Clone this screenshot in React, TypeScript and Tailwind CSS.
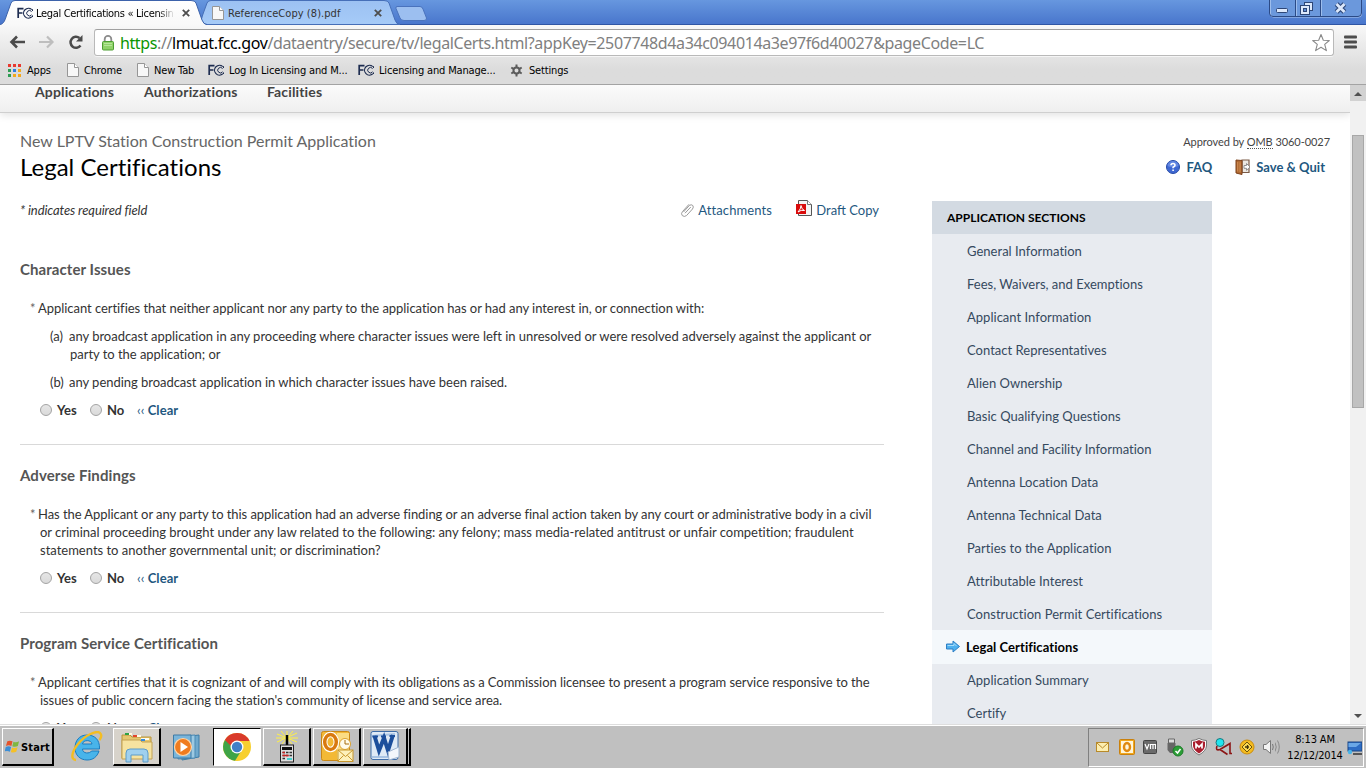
import React from "react";

const ui = "font-['DejaVu_Sans_Condensed','DejaVu_Sans',sans-serif]";

function FccLogo({ size = 16 }: { size?: number }) {
  return (
    <svg width={size} height={size} viewBox="0 0 16 16" fill="none" stroke="#1d2c50" className="shrink-0">
      <path d="M1.200 13V3.700H6.500M1.200 8H5.500" strokeWidth="1.700" />
      <path d="M14.800 4.600A4.900 4.900 0 1 0 14.800 11.800" strokeWidth="1.200" />
      <path d="M14.600 6.600A2.700 2.700 0 1 0 14.600 9.800M15.500 4.200V6M15.500 10.400V12" strokeWidth="1" />
    </svg>
  );
}

function PageIcon() {
  return (
    <svg width="12" height="14" viewBox="0 0 12 14" className="shrink-0">
      <path d="M.5.5H7.500L11.500 4.500V13.500H.5Z" fill="#f7f7f7" stroke="#969696" />
      <path d="M7.500.5V4.500H11.500" fill="#fff" stroke="#969696" />
    </svg>
  );
}

function CloseX() {
  return (
    <svg width="8" height="8" viewBox="0 0 8 8" stroke="#4d4d4d" strokeWidth="1.800" className="shrink-0">
      <path d="M.8.8L7.200 7.200M7.200.8L.8 7.200" />
    </svg>
  );
}

function TabStrip() {
  return (
    <div className="relative flex h-[25px] shrink-0 border-b border-[#2f55a4] bg-linear-to-b from-[#6797df] to-[#4976cc]">
      <svg width="440" height="26" className="absolute left-0 top-0">
        <defs>
          <linearGradient id="t2" x1="0" y1="0" x2="0" y2="1">
            <stop offset="0" stopColor="#9cc1f2" />
            <stop offset="1" stopColor="#a6cbf8" />
          </linearGradient>
          <linearGradient id="t1" x1="0" y1="0" x2="0" y2="1">
            <stop offset="0" stopColor="#ffffff" />
            <stop offset="1" stopColor="#f8f8f8" />
          </linearGradient>
        </defs>
        <path d="M196 24.500C201 24 201 20 203 14L207 3Q208 .5 211 .5H384Q388 .5 389 3L395 20Q396.500 24.500 400 24.500Z" fill="url(#t2)" stroke="#466fb8" />
        <path d="M397 6.500H420Q422 6.500 423 9L426.500 18Q427 20.500 424 20.500H404Q401 20.500 400 18L396 8.500Q395.500 6.500 397 6.500Z" fill="#9cbff0" stroke="#4a73bd" />
        <path d="M0 26V24.500C4 24 5 20 7 14L11 3Q12 .5 15 .5H191Q195 .5 196 3L202 20Q203.500 24.500 207 25V26Z" fill="url(#t1)" />
        <path d="M0 24.500C4 24 5 20 7 14L11 3Q12 .5 15 .5H191Q195 .5 196 3L202 20Q203.500 24.500 207 24.500" fill="none" stroke="#3c62aa" />
      </svg>
      <div className="relative flex h-[26px] w-[206px] items-center pl-[17px]">
        <FccLogo />
        <span className={`${ui} ml-[3px] w-[139px] overflow-hidden whitespace-nowrap bg-linear-to-r from-black from-88% to-transparent bg-clip-text pt-[2px] text-[11px] tracking-[-0.33px] text-transparent`}>
          Legal Certifications « Licensin
        </span>
        <span className="ml-[7px]"><CloseX /></span>
      </div>
      <div className="relative flex h-[26px] w-[190px] items-center pl-[6px]">
        <PageIcon />
        <span className={`${ui} ml-[4px] w-[142px] whitespace-nowrap pt-[2px] text-[11px] tracking-[0.06px] text-[#333]`}>ReferenceCopy (8).pdf</span>
        <span className="ml-[4px]"><CloseX /></span>
      </div>
      <svg width="94" height="18" viewBox="0 0 94 18" className="ml-auto mr-[3px]">
        <path d="M1.500 0V14Q1.500 17 4.500 17H89.500Q92.500 17 92.500 14V0" fill="#6b98dc" stroke="#b0c9f0" />
        <path d="M.5 0V13Q.5 16.500 4 16.500H89Q92.500 16.500 92.500 13V0M26.500 0V16M51.500 0V16" fill="none" stroke="#2b4a86" />
        <path d="M27.500 0V16M52.500 0V16M1.500 0V13" stroke="#9dbdec" />
        <rect x="7.500" y="8.500" width="11" height="4" rx="1" fill="#dce8fb" stroke="#2d4677" />
        <rect x="35.500" y="2.500" width="8" height="8" fill="#dce8fb" stroke="#2d4677" />
        <rect x="31.500" y="5.500" width="9" height="9" fill="#dce8fb" stroke="#2d4677" />
        <rect x="34.500" y="8.500" width="3" height="3" fill="#5e8cd5" stroke="#2d4677" />
        <path d="M67.500 4L75.500 12M75.500 4L67.500 12" stroke="#2d4677" strokeWidth="5" />
        <path d="M67.500 4L75.500 12M75.500 4L67.500 12" stroke="#dce8fb" strokeWidth="2.800" />
      </svg>
    </div>
  );
}

function Toolbar() {
  return (
    <div className="flex h-[33px] shrink-0 items-center pt-[2px]">
      <svg width="90" height="18" viewBox="0 0 90 18" fill="none" className="-mt-[2px] shrink-0">
        <path d="M25 9H12M17 3.500L11.500 9L17 14.500" stroke="#4b4b4b" strokeWidth="2.600" />
        <path d="M39 9H52M47 3.500L52.500 9L47 14.500" stroke="#bebebe" strokeWidth="2.200" />
        <path d="M80.500 12.500A5.500 5.500 0 1 1 79.500 5" stroke="#4b4b4b" strokeWidth="2.500" />
        <path d="M82.500 2V8.500H76Z" fill="#4b4b4b" />
      </svg>
      <div className="ml-[4px] flex h-[27px] w-[1240px] shrink-0 items-center rounded-[3px] border border-[#b9b9b9] border-t-[#a0a0a0] bg-white pl-[7px] shadow-[0_1px_0_#f5f5f5]">
        <svg width="12" height="16" viewBox="0 0 12 16" className="shrink-0">
          <path d="M2.700 7V4.200A3.300 3.300 0 0 1 9.300 4.200V7" fill="none" stroke="#8c8c8c" strokeWidth="1.800" />
          <rect x=".5" y="6.500" width="11" height="8.500" rx="1" fill="#8fd269" stroke="#4d9e33" />
          <path d="M2 8.500H10M2 10.500H10" stroke="#b6e69a" />
        </svg>
        <span className="ml-[6px] whitespace-nowrap font-['Noto_Sans',sans-serif] text-[16px] leading-[24px] tracking-[-0.395px] text-[#808080]">
          <span className="text-[#0b9500]">https</span>://<span className="text-black">lmuat.fcc.gov</span>/dataentry/secure/tv/legalCerts.html?<span className="tracking-[-0.37px]">appKey=2507748d4a34c094014a3e97f6d40027&amp;pageCode=LC</span>
        </span>
        <svg width="20" height="20" viewBox="0 0 20 20" className="ml-auto mr-[2px] shrink-0">
          <path d="M10 1.500L12.300 7.200L18.300 7.500L13.700 11.400L15.400 17.600L10 14.200L4.600 17.600L6.300 11.400L1.700 7.500L7.700 7.200Z" fill="#fff" stroke="#8a8a8a" strokeWidth="1.100" strokeLinejoin="round" />
        </svg>
      </div>
      <svg width="13" height="14" viewBox="0 0 13 14" className="-mt-px ml-[10px] shrink-0" fill="#4d4d4d">
        <rect y=".5" width="13" height="3" rx="1" /><rect y="5.500" width="13" height="3" rx="1" /><rect y="10.500" width="13" height="3" rx="1" />
      </svg>
    </div>
  );
}

const dots = ["#e8392f", "#e8392f", "#e8392f", "#2e9c53", "#2f7de1", "#f2a81d", "#2e9c53", "#f2a81d", "#f2a81d"];

function Bookmark({ icon, label, cls }: { icon: React.ReactNode; label: string; cls: string }) {
  return (
    <div className={`flex shrink-0 items-center ${cls}`}>
      {icon}
      <span className="whitespace-nowrap pt-[2px]">{label}</span>
    </div>
  );
}

function BookmarksBar() {
  return (
    <div className={`${ui} flex h-[26px] shrink-0 items-center pb-[2px] pl-[8px] text-[11px] tracking-[-0.16px] text-black`}>
      <Bookmark
        cls="w-[59px] gap-[6px]"
        label="Apps"
        icon={
          <svg width="13" height="13" viewBox="0 0 13 13" className="shrink-0">
            {dots.map((c, i) => <rect key={i} x={(i % 3) * 5} y={Math.floor(i / 3) * 5} width="3" height="3" fill={c} />)}
          </svg>
        }
      />
      <Bookmark cls="w-[70px] gap-[5px]" label="Chrome" icon={<PageIcon />} />
      <Bookmark cls="w-[71px] gap-[5px]" label="New Tab" icon={<PageIcon />} />
      <Bookmark cls="w-[150px] gap-[5px]" label="Log In Licensing and M..." icon={<FccLogo />} />
      <Bookmark cls="w-[152px] gap-[5px]" label="Licensing and Manage..." icon={<FccLogo />} />
      <Bookmark
        cls="gap-[6px]"
        label="Settings"
        icon={
          <svg width="13" height="13" viewBox="0 0 13 13" stroke="#5b5b5b" fill="none" className="shrink-0">
            <circle cx="6.500" cy="6.500" r="3" strokeWidth="2" />
            <path d="M6.500 .5V3M6.500 10V12.500M1.300 3.500L3.500 4.800M9.500 8.200L11.700 9.500M1.300 9.500L3.500 8.200M9.500 4.800L11.700 3.500" strokeWidth="2" />
          </svg>
        }
      />
    </div>
  );
}

function Answer() {
  const radio = "size-[12px] rounded-full border border-[#a3a3a3] bg-linear-to-b from-[#e6e6e6] to-[#dadada]";
  return (
    <div className="mt-[10px] flex h-[18px] items-center pl-[20px] font-bold text-[#333]">
      <span className={radio} />
      <span className="ml-[5px] w-[33px]">Yes</span>
      <span className={radio} />
      <span className="ml-[5px] w-[30px]">No</span>
      <span className="whitespace-nowrap tracking-[0.07px] text-[#1f587f]"><span className="font-normal">‹‹</span> Clear</span>
    </div>
  );
}

function Section({ title, lines, children }: { title: string; lines: { t: string; c: string }[]; children?: React.ReactNode }) {
  return (
    <section className="border-b border-[#d9d9d9] pb-[25px] pt-[21px]">
      <h2 className="h-[18px] text-[15px] font-bold leading-[18px] tracking-[0.08px] text-[#555]">{title}</h2>
      <div className="mt-[21px] pl-[20px]">
        {lines.map((l, i) => (
          <p key={l.t} className={`h-[18px] whitespace-nowrap ${i === 0 ? "-ml-[10px]" : ""}`}>
            {i === 0 && <span className="inline-block w-[8px] text-[#666]">*</span>}
            <span className={l.c}>{l.t}</span>
          </p>
        ))}
        {children}
      </div>
      <Answer />
    </section>
  );
}

function Content() {
  return (
    <div className="w-[864px]">
      <div className="flex h-[20px] items-center pt-[2px] text-[13px]">
        <i className="tracking-[-0.1px] text-[#333]">* indicates required field</i>
        <svg width="15" height="16" viewBox="0 0 14 16" fill="none" className="-mt-[2px] ml-auto shrink-0">
          <path d="M3 10L8.800 3.500Q10.800 2 12.300 3.500Q13.500 5 12 7L6 13.600Q3.800 15.300 1.800 13.600Q.2 11.700 1.900 9.700L8.500 2.300M4.500 11.200L10.300 5" stroke="#9a9a9a" strokeWidth="1" />
        </svg>
        <a className="ml-[3px] w-[98px] whitespace-nowrap tracking-[0.09px] text-[#1f587f]">Attachments</a>
        <svg width="17" height="18" viewBox="0 0 17 18" className="-mt-[7px] shrink-0">
          <path d="M2.500 1.500H11.500L15.500 5.500V16.500H2.500Z" fill="#f4f4f4" stroke="#555" />
          <path d="M11.500 1.500V5.500H15.500" fill="#fff" stroke="#777" />
          <rect x="0" y="5" width="10" height="10" fill="#d90b0b" />
          <path d="M2 13Q5 10 5 6.500Q5.500 10.500 8.500 11.500Q5 10.500 2 13" fill="none" stroke="#fff" />
        </svg>
        <a className="ml-[3px] mr-[5px] whitespace-nowrap text-[#1f587f]">Draft Copy</a>
      </div>
      <div className="mt-[19px] text-[13px] leading-[18px] text-[#333]">
        <Section
          title="Character Issues"
          lines={[{ t: "Applicant certifies that neither applicant nor any party to the application has or had any interest in, or connection with:", c: "tracking-[-0.047px]" }]}
        >
          <ol className="pl-[10px]">
            <li className="mt-[10px] flex whitespace-nowrap">
              <span className="w-[19px] shrink-0">(a)</span>
              <div>
                <p className="tracking-[-0.024px]">any broadcast application in any proceeding where character issues were left in unresolved or were resolved adversely against the applicant or</p>
                <p className="pl-px tracking-[-0.03px]">party to the application; or</p>
              </div>
            </li>
            <li className="mt-[10px] flex whitespace-nowrap">
              <span className="w-[19px] shrink-0">(b)</span>
              <p className="tracking-[-0.035px]">any pending broadcast application in which character issues have been raised.</p>
            </li>
          </ol>
        </Section>
        <Section
          title="Adverse Findings"
          lines={[
            { t: "Has the Applicant or any party to this application had an adverse finding or an adverse final action taken by any court or administrative body in a civil", c: "tracking-[-0.06px]" },
            { t: "or criminal proceeding brought under any law related to the following: any felony; mass media-related antitrust or unfair competition; fraudulent", c: "tracking-[-0.021px]" },
            { t: "statements to another governmental unit; or discrimination?", c: "" },
          ]}
        />
        <Section
          title="Program Service Certification"
          lines={[
            { t: "Applicant certifies that it is cognizant of and will comply with its obligations as a Commission licensee to present a program service responsive to the", c: "tracking-[-0.064px]" },
            { t: "issues of public concern facing the station's community of license and service area.", c: "tracking-[-0.07px]" },
          ]}
        />
      </div>
    </div>
  );
}

const sections = [
  "General Information", "Fees, Waivers, and Exemptions", "Applicant Information", "Contact Representatives",
  "Alien Ownership", "Basic Qualifying Questions", "Channel and Facility Information", "Antenna Location Data",
  "Antenna Technical Data", "Parties to the Application", "Attributable Interest", "Construction Permit Certifications",
  "Legal Certifications", "Application Summary", "Certify",
];

function Sidebar() {
  return (
    <aside className="ml-[48px] w-[280px] shrink-0 bg-[#e8ebf0] text-[13px] text-[#35495e]">
      <h3 className="flex h-[33px] items-center bg-[#d3dae2] pl-[15px] text-[12px] font-bold text-black">APPLICATION SECTIONS</h3>
      {sections.map((s) =>
        s === "Legal Certifications" ? (
          <div key={s} className="-mb-px flex h-[34px] items-center bg-[#f4f8fb] pl-[14px] font-bold text-black">
            <svg width="14" height="13" viewBox="0 0 14 13" className="-mt-px shrink-0">
              <path d="M.5 4H7V1L13.500 6.500L7 12V9H.5Z" fill="#4eb0ee" stroke="#2d7fc4" />
              <path d="M1.500 5.500H8V3.500L10.500 6" fill="none" stroke="#a5dcfa" />
            </svg>
            <span className="ml-[6px] pt-px tracking-[0.06px]">{s}</span>
          </div>
        ) : (
          <div key={s} className="flex h-[33px] items-center whitespace-nowrap pl-[35px] pt-[2px] tracking-[0.02px]">{s}</div>
        )
      )}
    </aside>
  );
}

function Page() {
  return (
    <div className="flex h-[639px] shrink-0">
      <main className="h-[639px] w-[1350px] overflow-hidden bg-white font-[Lato,sans-serif]">
        <nav className="flex h-[28px] border-b border-[#cfcfcf] bg-linear-to-b from-[#fbfbfb] to-[#efefef] pl-[35px] text-[14px] font-bold leading-[13px] tracking-[0.14px] text-[#444] shadow-[0_2px_8px_rgba(0,0,0,0.12)]">
          <a className="w-[109px]">Applications</a>
          <a className="w-[123px]">Authorizations</a>
          <a>Facilities</a>
        </nav>
        <div className="flex h-[88px] justify-between px-[20px] pt-[17px]">
          <div>
            <p className="h-[20px] whitespace-nowrap text-[16px] leading-[22px] tracking-[-0.01px] text-[#666]">New LPTV Station Construction Permit Application</p>
            <h1 className="whitespace-nowrap text-[24px] leading-[34px] tracking-[0.02px] text-black">Legal Certifications</h1>
          </div>
          <div className="text-right">
            <p className="pt-[4px] text-[11px] leading-[16px] tracking-[-0.06px] text-[#444]">
              Approved by <span className="border-b border-dotted border-[#555]">OMB</span> 3060-0027
            </p>
            <div className="mt-[8px] flex h-[20px] items-center justify-end pr-[5px] text-[13px] font-bold text-[#1f587f]">
              <svg width="14" height="14" viewBox="0 0 14 14" className="-mt-[2px] shrink-0">
                <circle cx="7" cy="7" r="6.500" fill="#3f68d2" stroke="#264ba6" />
                <path d="M1.500 6A5.500 5 0 0 1 12.500 6Q7 8.500 1.500 6" fill="#7b9cec" opacity=".6" />
                <path d="M5 5.300Q5 3.500 7 3.500Q9 3.500 9 5.200Q9 6.300 7.100 7.200V8.300M7.100 9.500V11" fill="none" stroke="#fff" strokeWidth="1.600" />
              </svg>
              <a className="ml-[6px]">FAQ</a>
              <svg width="16" height="16" viewBox="0 0 15 16" className="-mt-[2px] ml-[23px] shrink-0">
                <path d="M6.500 1H13.500V13.500H6.500Z" fill="#ece8e2" stroke="#7b5b47" strokeWidth="1.200" />
                <path d="M.5 1L6.500 1.500V15.500L.5 14Z" fill="#b06a33" stroke="#7d411b" />
                <path d="M2.200 3V12.500M4.500 3.300V13" stroke="#d08e55" />
                <path d="M8.500 6.500H11V4.500L14.500 8L11 11.300V9.300H8.500Z" fill="#fff" stroke="#8f8f8f" />
              </svg>
              <a className="ml-[5px] whitespace-nowrap">Save &amp; Quit</a>
            </div>
          </div>
        </div>
        <div className="flex pl-[20px]">
          <div className="-mt-px"><Content /></div>
          <Sidebar />
        </div>
      </main>
      <div className="flex w-[16px] flex-col items-center bg-[#f1f1f1]">
        <div className="flex h-[16px] w-[16px] items-center justify-center bg-[#d2d2d2]">
          <svg width="8" height="4" className="mt-[2px]"><path d="M0 4L4 0L8 4Z" fill="#505050" /></svg>
        </div>
        <div className="mt-[34px] h-[273px] w-[12px] border border-[#a8a8a8] bg-[#c1c1c1]" />
        <svg width="8" height="4" className="mb-[6px] mt-auto"><path d="M0 0L4 4L8 0Z" fill="#505050" /></svg>
      </div>
    </div>
  );
}

const raised = "border border-b-2 border-r-2 border-l-[#fff] border-t-[#fff] border-b-black border-r-black";

function Taskbar() {
  return (
    <div className="flex h-[44px] shrink-0 items-start border-t border-[#dedede] bg-[#c0c0c0] shadow-[inset_0_1px_0_#fff]">
      <div className={`${raised} ml-[2px] mt-[3px] flex h-[38px] w-[52px] items-center pl-[2px]`}>
        <svg width="15" height="15" viewBox="0 0 16 16" className="shrink-0">
          <path d="M2.500 2.500Q5 1 8 2.500L6.800 7.500Q4 6 1 7.500Z" fill="#e5532b" />
          <path d="M9 3Q12 4.300 15 2.500L13.700 7.500Q11 9 7.800 7.800Z" fill="#7fb740" />
          <path d="M.8 8.500Q4 7 6.500 8.500L5.200 13.500Q2.500 12 -.4 13.300Z" fill="#3c8ed6" />
          <path d="M7.500 9Q10.500 10.300 13.400 8.700L12 13.500Q9 15 6.200 13.800Z" fill="#f5c026" />
        </svg>
        <span className="ml-px pt-[3px] font-['DejaVu_Sans_Condensed',sans-serif] text-[11px] font-bold tracking-[0.15px] text-black">Start</span>
      </div>
      <svg width="32" height="32" viewBox="0 0 32 32" className="ml-[17px] mt-[6px] shrink-0">
        <path d="M16 4C8 4 4 10 4 17C4 24 9 29 16 29C22 29 26 26 28 20H20.500C19 22.800 11.500 23 11.500 18H28.500C29 8 23 4 16 4ZM11.500 13C12 8.500 20.500 8.500 21 13Z" fill="#48b4ea" stroke="#1a7cc0" />
        <path d="M5 29C-1 29 1 20 7 13C14 4 26-1 29 2C31 4 30 7 28.500 9" fill="none" stroke="#f3bd22" strokeWidth="2.400" />
      </svg>
      <div className={`${raised} ml-[10px] mt-[3px] flex h-[38px] w-[48px] items-center justify-center bg-[#d7d3cb]`}>
        <svg width="34" height="32" viewBox="0 0 34 32">
          <path d="M2 4H10L12 6H31V27H2Z" fill="#e6c76f" stroke="#b8943a" />
          <path d="M5 2H12V4H5ZM13 4H21V6H13ZM21 7H29V9H21Z" fill="#fffbe8" />
          <path d="M5 2H9V4H5Z" fill="#2fa245" /><path d="M13 4H17V6H13Z" fill="#e4452b" /><path d="M21 8H25V10H21Z" fill="#3389dd" />
          <path d="M2 9H20L22 11H32V28H2Z" fill="#f6e3a0" stroke="#c3a253" />
          <path d="M6 31V22Q6 18 10 18H24Q28 18 28 22V31H23V24H11V31Z" fill="#9fd0ee" stroke="#5d9cc9" />
        </svg>
      </div>
      <svg width="30" height="30" viewBox="0 0 30 30" className="ml-[11px] mt-[7px] shrink-0">
        <path d="M10 5L27 3V25L10 28Z" fill="#6fa9cd" stroke="#3c7ba6" />
        <path d="M6 4L23 3V26L6 27Z" fill="#9cc9e2" stroke="#4b8ab4" />
        <path d="M1.500 3L19 3V26L1.500 26Z" fill="#7ab5da" stroke="#3c7ba6" />
        <circle cx="11" cy="15" r="8.500" fill="#f07c1f" stroke="#ffd6a8" strokeWidth="1.200" />
        <path d="M8.500 10L16 15L8.500 20Z" fill="#fff" />
      </svg>
      <div className="ml-[11px] mt-[3px] flex h-[38px] w-[48px] items-center justify-center border border-b-[#fff] border-l-black border-r-[#fff] border-t-black bg-white">
        <svg width="28" height="28" viewBox="0 0 28 28">
          <circle cx="14" cy="14" r="14" fill="#f7cf2e" />
          <path d="M14 14L1.900 7A14 14 0 0 0 12 27.800L18.500 17.500Z" fill="#3fa447" />
          <path d="M1.900 7A14 14 0 0 1 26.600 8H14Q9 9 8 13Z" fill="#d93a2b" />
          <circle cx="14" cy="14" r="6.500" fill="#fff" />
          <circle cx="14" cy="14" r="5.200" fill="#3f80c8" />
        </svg>
      </div>
      <div className={`${raised} ml-[2px] mt-[3px] flex h-[38px] w-[48px] items-center justify-center`}>
        <svg width="24" height="32" viewBox="0 0 24 32">
          <path d="M2 3L22 11M22 2L2 11M12 0V12M1 7H23M6 0L17 13M18 0L7 13" stroke="#fff044" strokeWidth="1" />
          <path d="M12 4V15" stroke="#000" strokeWidth="2.500" />
          <rect x="5.500" y="14" width="13" height="17" fill="#ddd" stroke="#222" />
          <rect x="7" y="16" width="10" height="3" fill="#111" />
          <path d="M7.500 21.500H10M11 21.500H13.500M14.500 21.500H17M7.500 24.500H10M11 24.500H13.500M14.500 24.500H17M7.500 27.500H10" stroke="#333" strokeWidth="1.500" />
          <path d="M7.500 21.500H10M7.500 24.500H13.500" stroke="#c22" strokeWidth="1.500" /><path d="M12 28H17" stroke="#1cc" strokeWidth="1.500" />
        </svg>
      </div>
      <div className={`${raised} ml-[2px] mt-[3px] flex h-[38px] w-[48px] items-center justify-center`}>
        <svg width="34" height="33" viewBox="0 0 34 33">
          <rect x="1.500" y="1.500" width="28" height="29" rx="2" fill="#f3b936" stroke="#c98716" />
          <path d="M17 3H29V29H17Z" fill="#fbdc83" />
          <ellipse cx="10.500" cy="12" rx="5.800" ry="7.500" fill="none" stroke="#fff" strokeWidth="5.500" />
          <ellipse cx="10.500" cy="12" rx="5.800" ry="7.500" fill="none" stroke="#d97a10" strokeWidth="3.500" />
          <circle cx="25" cy="14" r="5.500" fill="#fffbe9" stroke="#dba12d" />
          <path d="M25 10V14H29" fill="none" stroke="#a86d0b" />
          <rect x="18" y="20" width="15" height="11.500" fill="#fdf1bb" stroke="#c8972d" />
          <path d="M18 20L25.500 26.500L33 20M18 31L23.500 25.500M33 31L27.500 25.500" fill="none" stroke="#c8972d" />
        </svg>
      </div>
      <div className={`${raised} ml-[2px] mt-[3px] flex h-[38px] w-[45px] items-center justify-center`}>
        <svg width="32" height="32" viewBox="0 0 32 32" className="-ml-px -mt-[2px]">
          <rect x="2" y="1.500" width="27" height="28" rx="2" fill="#dfeaf6" stroke="#3d6ca8" />
          <path d="M3 6L26 4M3 27H27" stroke="#a9c4e4" strokeWidth="2" />
          <path d="M5.500 6L10 20.500L15 8L19 20.500L24 5" fill="none" stroke="#1c4f9c" strokeWidth="4" />
          <path d="M3.500 6.500H9M12 6.500H17M20.500 6H26" stroke="#1c4f9c" strokeWidth="2" />
          <path d="M19 22L30 17V27L20 30Z" fill="#f3f7fc" stroke="#9db4d0" />
        </svg>
      </div>
      <div className="mt-[3px] h-[38px] w-[3px] border-b-2 border-r-2 border-t border-b-black border-r-black border-t-white" />
      <div className={`${ui} ml-auto mr-[2px] mt-[3px] flex h-[39px] w-[276px] items-center border border-b-white border-l-[#808080] border-r-white border-t-[#808080] text-[11px] text-black`}>
        <svg width="186" height="24" viewBox="0 0 186 24" className="-mt-px shrink-0">
          <rect x="7.500" y="7.500" width="12" height="9" fill="#fdeeb0" stroke="#b88a2a" />
          <path d="M8 8L13.500 13L19 8" fill="none" stroke="#b88a2a" />
          <rect x="30.500" y="4.500" width="15" height="15" rx="1" fill="#f2a81c" stroke="#c9800d" />
          <rect x="32" y="6" width="12" height="12" fill="#fff6dc" />
          <ellipse cx="38" cy="12" rx="3" ry="4" fill="none" stroke="#e08a10" strokeWidth="2.400" />
          <rect x="54.500" y="5.500" width="13" height="13" rx="1" fill="#6a6a6a" stroke="#444" />
          <path d="M56 9L58 14L60 9M61.500 14V9.500H66.500V14M64 9.500V14" fill="none" stroke="#fff" strokeWidth="1.200" />
          <path d="M79.500 4H85.500V8H79.500Z" fill="#ddd" stroke="#666" /><path d="M78.500 8H86.500V15L84 18H81L78.500 15Z" fill="#666" />
          <circle cx="89" cy="16" r="5" fill="#2c9e37" stroke="#1c7b27" />
          <path d="M86.500 16L88.500 18L91.500 14" fill="none" stroke="#fff" strokeWidth="1.500" />
          <path d="M102.500 5.500Q106 5.500 110 3.500Q114 5.500 117.500 5.500V11Q117 16 110 20Q103 16 102.500 11Z" fill="#fff" stroke="#777" />
          <path d="M104 6.800Q107 6.500 110 5Q113 6.500 116 6.800V11Q115.500 15 110 18.500Q104.500 15 104 11Z" fill="#a91e2e" />
          <path d="M107 13.500V9L110 12L113 9V13.500" fill="none" stroke="#fff" strokeWidth="1.700" />
          <path d="M128 11Q126 16 131 14.500L141 8.500V18.500H143M131 14.500L138.500 19.500" fill="none" stroke="#8b1515" strokeWidth="1.600" />
          <circle cx="131" cy="7.500" r="4" fill="#20e5ef" stroke="#19797e" />
          <circle cx="158" cy="12" r="7" fill="#f4bb1f" stroke="#c88c10" />
          <path d="M158 7L163 12L158 17L153 12Z" fill="#fddb54" stroke="#6b5410" />
          <path d="M156 12H160M158.500 10V14" stroke="#40340d" strokeWidth="1.300" />
          <path d="M174.500 9.500H177L181.500 5.500V18.500L177 14.500H174.500Z" fill="#f3f3f3" stroke="#777" />
          <path d="M183.500 9Q185 12 183.500 15" fill="none" stroke="#777" />
        </svg>
        <svg width="6" height="14" viewBox="0 0 6 14" className="-mt-px shrink-0" fill="none" stroke="#888"><path d="M0 2.500Q2.500 7 0 11.500M2.500 .5Q6 7 2.500 13.500" /></svg>
        <div className="ml-px w-[66px] shrink-0 text-center leading-[16px] tracking-[-0.15px]">
          <p>8:13 AM</p>
          <p>12/12/2014</p>
        </div>
        <svg width="15" height="14" viewBox="0 0 15 14" className="-ml-px shrink-0">
          <rect x="1" y="1" width="14" height="9" fill="#2d6cc4" stroke="#184583" />
          <path d="M1.500 2H14L9 6H1.500Z" fill="#6aa7e6" />
          <path d="M6 13H15" stroke="#333" strokeWidth="1.500" /><circle cx="3" cy="11" r="2.200" fill="#49b4e9" />
        </svg>
      </div>
    </div>
  );
}

export default function App() {
  return (
    <div className="flex h-[768px] w-[1366px] flex-col overflow-hidden bg-white">
      <TabStrip />
      <div className="h-[60px] shrink-0 border-b border-[#a3a3a3] bg-linear-to-b from-[#f8f8f8] to-[#dcdcdc] to-75%">
        <Toolbar />
        <BookmarksBar />
      </div>
      <Page />
      <Taskbar />
    </div>
  );
}
